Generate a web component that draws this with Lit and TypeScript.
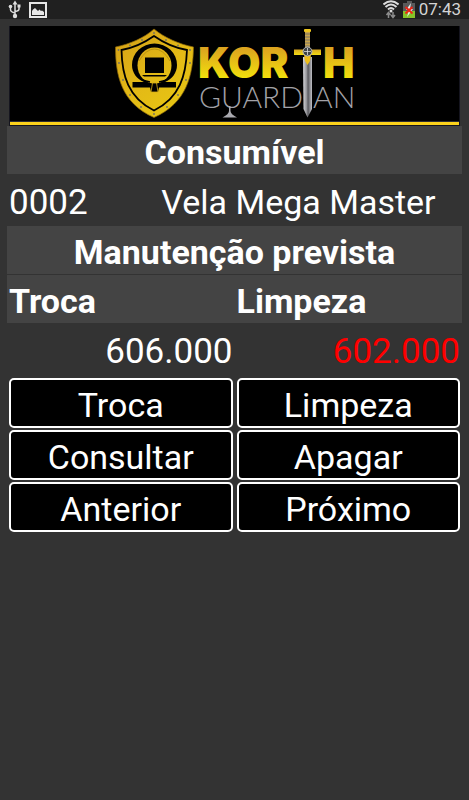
import { LitElement, html, css } from "lit";
import { customElement } from "lit/decorators.js";

@customElement("status-bar")
class StatusBar extends LitElement {
  static styles = css`
    :host {
      display: flex;
      align-items: center;
      justify-content: space-between;
      height: 19px;
      padding: 0 8px;
      background: #202020;
      color: #d4d4d4;
      font-size: 17px;
      line-height: 19px;
    }
    .group {
      display: flex;
      align-items: center;
    }
    .left {
      gap: 8px;
    }
    .right {
      gap: 4px;
    }
    svg {
      display: block;
    }
  `;

  render() {
    return html`
      <div class="group left">
        <svg width="13" height="19" viewBox="0 0 13 19" fill="none" stroke="#dedede" stroke-width="1.5">
          <path d="M7 3V15M2.5 7V9.5Q2.5 12 7 13M11 7V9Q11 11 7 11.5" />
          <path d="M7 0.5L9.5 4.5H4.5Z" fill="#dedede" stroke="none" />
          <rect x="9.5" y="4.5" width="3" height="3" fill="#dedede" stroke="none" />
          <circle cx="2.5" cy="6.5" r="1.8" fill="#dedede" stroke="none" />
          <circle cx="7" cy="16" r="2.2" fill="#dedede" stroke="none" />
        </svg>
        <svg width="18" height="19" viewBox="0 0 18 19">
          <rect x="1" y="3" width="16" height="14" fill="#202020" stroke="#e6e6e6" stroke-width="2" />
          <path d="M3 15V11L4 9.500L6 8L9 11L10.500 9.500L12 11L13 10.500L15 12V15Z" fill="#e6e6e6" />
        </svg>
      </div>
      <div class="group right">
        <svg width="16" height="19" viewBox="0 0 16 19" fill="none" stroke="#dcdcdc">
          <path d="M0.500 4.500Q8 -2 15.500 4.500M2.500 7Q8 2 13.500 7M5 9.500Q8 6.500 11 9.500" stroke-width="2" />
          <circle cx="8" cy="11" r="1.500" fill="#dcdcdc" stroke="none" />
          <path d="M5.500 18V13M3.500 15L5.500 12.500L7.500 15M10 12V17M8 15L10 17.500L12 15" stroke="#8c8c8c" stroke-width="1.500" />
        </svg>
        <svg width="12" height="19" viewBox="0 0 12 19">
          <path d="M4 1H9V3H12V18H0V3H4Z" fill="#5a5a5a" />
          <rect y="11" width="12" height="7" fill="#86c328" />
          <path d="M8 3L3 10H6L4 17L10 9H7Z" fill="#e8e8e8" />
          <path d="M2.500 7L9.500 13.500M9.500 7L2.500 13.500" stroke="#f02414" stroke-width="2" />
        </svg>
        <time>07:43</time>
      </div>
    `;
  }
}

@customElement("brand-banner")
class BrandBanner extends LitElement {
  static styles = css`
    :host {
      display: block;
      background: #000;
      border: 1px solid #15151f;
      border-top: 0;
    }
    svg {
      display: block;
      width: 100%;
      height: 95px;
      border-bottom: 1px solid #2c2c34;
    }
    .line {
      height: 3px;
      background: #fcd21c;
    }
    .korth {
      font: 900 42px Inter, sans-serif;
    }
    .guardian {
      font: 300 30px Lato, sans-serif;
    }
  `;

  render() {
    return html`
      <svg viewBox="10 26 449 95" role="img" aria-label="Korth Guardian">
        <defs>
          <linearGradient id="gold" x1="0" y1="0" x2="0" y2="1">
            <stop offset="0" stop-color="#d9a520" />
            <stop offset="1" stop-color="#f2dc12" />
          </linearGradient>
          <linearGradient id="shield" gradientUnits="userSpaceOnUse" x1="120" y1="30" x2="190" y2="115">
            <stop offset="0" stop-color="#d4a017" />
            <stop offset="0.5" stop-color="#e3b916" />
            <stop offset="1" stop-color="#e8c912" />
          </linearGradient>
          <linearGradient id="letters" gradientUnits="userSpaceOnUse" x1="0" y1="49" x2="0" y2="78">
            <stop offset="0" stop-color="#dca51f" />
            <stop offset="1" stop-color="#f2e00c" />
          </linearGradient>
          <linearGradient id="blade" x1="0" y1="0" x2="1" y2="0">
            <stop offset="0" stop-color="#d8d8dc" />
            <stop offset="0.45" stop-color="#8b8b90" />
            <stop offset="0.55" stop-color="#55555a" />
            <stop offset="1" stop-color="#c2c2c8" />
          </linearGradient>
        </defs>

        <path d="M154 29C144 38 130 44 115.500 47C115.500 75 121 103 154 117.500C187 103 193 75 193.500 47C179 44 165 38 154 29Z" fill="url(#shield)" stroke="#8a6508" stroke-width="0.700" />
        <path d="M154 36C144 43 133 48 121.500 50C122 75 128 98 154 110.500C180 98 186 75 187 50C175 48 164 43 154 36Z" fill="none" stroke="#000" stroke-width="1.800" />
        <g fill="#70706a">
          <circle cx="154" cy="33" r="0.900" /><circle cx="142" cy="40" r="0.900" /><circle cx="166" cy="40" r="0.900" />
          <circle cx="130" cy="45.500" r="0.900" /><circle cx="178" cy="45.500" r="0.900" /><circle cx="118.500" cy="50" r="0.900" />
          <circle cx="190" cy="50" r="0.900" /><circle cx="119" cy="63" r="0.900" /><circle cx="190" cy="63" r="0.900" />
          <circle cx="123" cy="80" r="0.900" /><circle cx="186" cy="80" r="0.900" /><circle cx="130" cy="95" r="0.900" />
          <circle cx="178" cy="95" r="0.900" /><circle cx="141" cy="107" r="0.900" /><circle cx="167" cy="107" r="0.900" />
          <circle cx="154" cy="114" r="0.900" />
        </g>
        <path d="M132.500 82H144C137 79 132 73 132 65A22.500 21.500 0 0 1 177 65C177 73 172 79 165 82H176V87.500H159L158 92H151L150 87.500H132.500Z" fill="#000" />
        <ellipse cx="154.500" cy="65.500" rx="17" ry="18" fill="url(#shield)" />
        <path d="M139 61Q146 49 154.500 49Q163 49 170 61" fill="none" stroke="#aa8510" stroke-width="0.700" />
        <rect x="145" y="57.500" width="19" height="15.500" fill="#000" />
        <path d="M142 75H167L165 76.500H144Z" fill="#000" />
        <path d="M142 80L150 82M167 80L159 82" stroke="#000" stroke-width="1.500" />
        <path d="M152.500 83H156.500L158 92H151Z" fill="#000" stroke="#d7ac16" stroke-width="0.800" />

        <text class="korth" x="198" y="78" fill="url(#letters)">KOR</text>
        <text class="korth" x="323" y="78" fill="url(#letters)">H</text>
        <text class="guardian" x="199" y="108" fill="#a2a2a8">GUARD</text>
        <text class="guardian" x="313" y="108" fill="#a2a2a8">AN</text>
        <path d="M229 106V111Q229 114 222.500 117.500H237Q230.500 114 230.500 111V106Z" fill="#aaaab0" />

        <path d="M303 57H312V109L307.500 117.500L303.500 109Z" fill="url(#blade)" />
        <rect x="305" y="31" width="5" height="19" fill="#c9a44b" />
        <path d="M305 34H310M305 37H310M305 40H310M305 43H310M305 46H310" stroke="#77736a" />
        <rect x="304" y="29" width="7" height="3" rx="1" fill="#edc41d" />
        <rect x="294" y="49.500" width="27" height="5.500" fill="url(#gold)" />
        <path d="M304 55H311L310 61L307.500 65L305 61Z" fill="#edbd19" />
        <circle cx="307.500" cy="51.500" r="4.500" fill="#3f4447" stroke="#b8b8b8" />
        <path d="M307.500 48V55M304 51.500H311" stroke="#dadada" stroke-width="0.800" />
      </svg>
      <div class="line"></div>
    `;
  }
}

@customElement("app-root")
class AppRoot extends LitElement {
  static styles = css`
    :host {
      display: block;
      min-height: 100vh;
      background: #333;
      color: #fff;
      font-family: Roboto, sans-serif;
    }
    main {
      padding: 7px 7px 0;
      font-size: 35px;
      line-height: 48px;
    }
    brand-banner {
      margin: 0 2px;
    }
    h1,
    h2 {
      margin: 0;
      padding-top: 5px;
      font-size: 34px;
      line-height: 43px;
      font-weight: 700;
      text-align: center;
      background: #444;
    }
    .item {
      display: grid;
      grid-template-columns: 1fr 2fr;
      align-items: baseline;
      padding: 5px 2px 0;
      line-height: 46px;
    }
    .name {
      padding-left: 2px;
      font-size: 34px;
    }
    table {
      width: 100%;
      margin-top: 1px;
      border-collapse: collapse;
      table-layout: fixed;
    }
    th {
      padding: 5px 2px 0;
      font-size: 34px;
      line-height: 43px;
      font-weight: 700;
      text-align: left;
      background: #444;
    }
    td {
      padding: 5px 2px 2px;
      text-align: right;
    }
    .due {
      color: #f00;
    }
    .actions {
      display: grid;
      grid-template-columns: 1fr 1fr;
      gap: 2px 4px;
      padding: 0 2px;
    }
    button {
      height: 50px;
      padding: 3px 0 0;
      border: 2px solid #fff;
      border-radius: 5px;
      background: #000;
      color: #fff;
      font: 400 34px Roboto, sans-serif;
    }
  `;

  private actions = ["Troca", "Limpeza", "Consultar", "Apagar", "Anterior", "Próximo"];

  render() {
    return html`
      <status-bar></status-bar>
      <main>
        <brand-banner></brand-banner>
        <h1>Consumível</h1>
        <div class="item"><span>0002</span><span class="name">Vela Mega Master</span></div>
        <h2>Manutenção prevista</h2>
        <table>
          <thead>
            <tr><th scope="col">Troca</th><th scope="col">Limpeza</th></tr>
          </thead>
          <tbody>
            <tr><td>606.000</td><td class="due">602.000</td></tr>
          </tbody>
        </table>
        <div class="actions">
          ${this.actions.map((label) => html`<button type="button">${label}</button>`)}
        </div>
      </main>
    `;
  }
}
